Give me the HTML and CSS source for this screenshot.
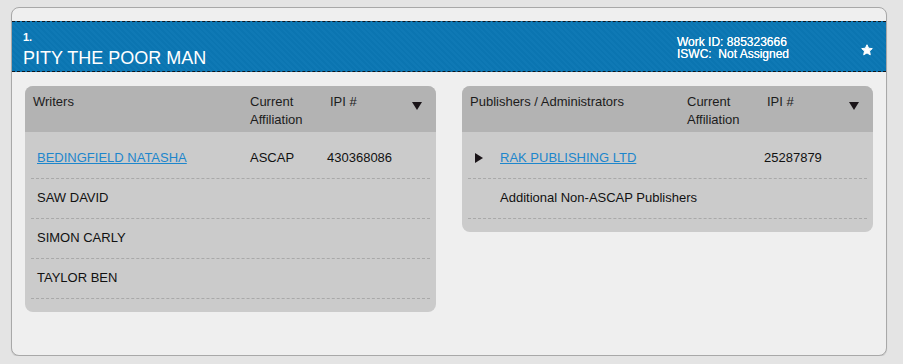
FILE: index.html
```html
<!DOCTYPE html>
<html lang="en">
<head>
    <meta charset="UTF-8">
    <title>Work Detail</title>
    <link rel="stylesheet" href="styles.css">
</head>
<body>
    <div class="work-card">
        <div class="work-header">
            <div class="work-title-block">
                <div class="work-index">1.</div>
                <div class="work-title">PITY THE POOR MAN</div>
            </div>
            <div class="work-meta">
                <div class="meta-text">
                    <div>Work ID: 885323666</div>
                    <div>ISWC:&nbsp; Not Assigned</div>
                </div>
                <svg class="star" width="12" height="12" viewBox="0 0 24 24">
                    <polygon points="12,1.5 15.2,8.4 22.6,9.2 17,14.2 18.6,21.6 12,17.8 5.4,21.6 7,14.2 1.4,9.2 8.8,8.4" fill="#ffffff" stroke="#ffffff" stroke-width="2" stroke-linejoin="round"/>
                </svg>
            </div>
        </div>

        <div class="panels">
            <div class="panel">
                <div class="panel-head">
                    <div>Writers</div>
                    <div>Current<br>Affiliation</div>
                    <div>IPI #</div>
                    <svg class="sort" width="10" height="8" viewBox="0 0 10 8"><polygon points="0,0 10,0 5,8" fill="#1a1418"/></svg>
                </div>
                <div class="row first">
                    <div><a href="#">BEDINGFIELD NATASHA</a></div>
                    <div>ASCAP</div>
                    <div>430368086</div>
                </div>
                <div class="row">
                    <div>SAW DAVID</div>
                    <div></div>
                    <div></div>
                </div>
                <div class="row">
                    <div>SIMON CARLY</div>
                    <div></div>
                    <div></div>
                </div>
                <div class="row">
                    <div>TAYLOR BEN</div>
                    <div></div>
                    <div></div>
                </div>
            </div>

            <div class="panel">
                <div class="panel-head">
                    <div>Publishers / Administrators</div>
                    <div>Current<br>Affiliation</div>
                    <div>IPI #</div>
                    <svg class="sort" width="10" height="8" viewBox="0 0 10 8"><polygon points="0,0 10,0 5,8" fill="#1a1418"/></svg>
                </div>
                <div class="row first">
                    <div class="publisher">
                        <svg class="expand" width="8" height="10" viewBox="0 0 8 10"><polygon points="0,0 8,5 0,10" fill="#1a1418"/></svg>
                        <a href="#">RAK PUBLISHING LTD</a>
                    </div>
                    <div></div>
                    <div>25287879</div>
                </div>
                <div class="row">
                    <div class="indented">Additional Non-ASCAP Publishers</div>
                </div>
            </div>
        </div>
    </div>
</body>
</html>
```

FILE: styles.css
```css
* {
    margin: 0;
    padding: 0;
    box-sizing: border-box;
}

body {
    background: #e4e4e4;
    font-family: 'Liberation Sans', Arial, sans-serif;
    font-size: 13px;
    color: #111111;
    padding: 7px 0 0 11px;
}

.work-card {
    width: 876px;
    height: 349px;
    background: #efefef;
    border: 1px solid #a8a8a8;
    border-radius: 8px;
    padding-top: 13px;
    box-shadow: 0 1px 1px rgba(0, 0, 0, 0.12);
}

/* blue title strip */
.work-header {
    display: flex;
    justify-content: space-between;
    align-items: flex-start;
    background-color: #0b77b4;
    background-image: repeating-linear-gradient(45deg, rgba(255, 255, 255, 0.015) 0 2px, rgba(0, 0, 0, 0.015) 2px 4px);
    border-top: 1px dashed #101820;
    border-bottom: 1px dashed #101820;
    color: #ffffff;
    padding: 9px 13px 3px 11px;
}

.work-index {
    font-size: 11px;
    line-height: 12px;
    font-weight: bold;
}

.work-title {
    font-size: 18px;
    line-height: 20px;
    margin-top: 5px;
}

.work-meta {
    display: flex;
    align-items: center;
    margin-top: 5px;
}

.meta-text {
    width: 184px;
    font-size: 12px;
    line-height: 12px;
    text-shadow: 0 0 0.4px #ffffff;
}

.star {
    display: block;
    margin-top: 3px;
}

/* writer / publisher tables */
.panels {
    display: flex;
    gap: 26px;
    padding: 14px 12px 0 13px;
    align-items: flex-start;
}

.panel {
    width: 411px;
    background: #cbcbcb;
    border-radius: 8px;
    overflow: hidden;
    padding-bottom: 13px;
}

.panel-head {
    display: grid;
    grid-template-columns: 217px 80px 1fr auto;
    background: #b3b3b3;
    color: #1c1c1c;
    line-height: 18px;
    height: 46px;
    padding: 7px 14px 3px 8px;
}

.sort {
    display: block;
    margin-top: 9px;
}

.row {
    display: grid;
    grid-template-columns: 213px 77px 1fr;
    margin: 0 6px;
    padding: 11px 0 12px 6px;
    line-height: 16px;
    border-bottom: 1px dashed #a9a9a9;
}

.row.first {
    padding-top: 18px;
}

.row a {
    color: #1d86cc;
    text-decoration: underline;
}

.publisher {
    display: flex;
    align-items: center;
}

.expand {
    display: block;
    margin: 0 17px 0 1px;
}

.indented {
    grid-column: 1 / -1;
    padding-left: 26px;
}
```
